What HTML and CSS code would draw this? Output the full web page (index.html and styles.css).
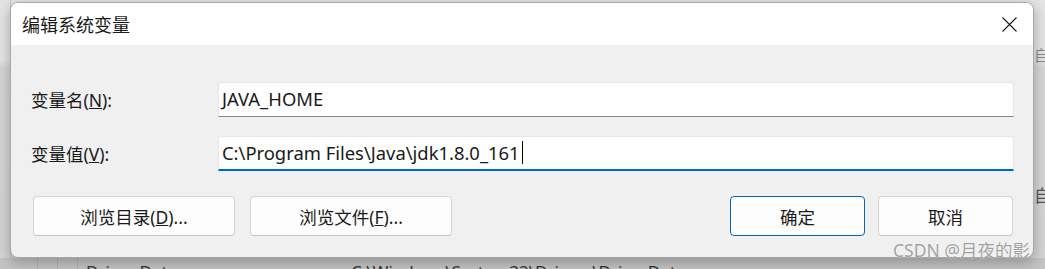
FILE: index.html
```html
<!DOCTYPE html>
<html lang="zh-CN">
<head>
  <meta charset="UTF-8" />
  <title>编辑系统变量</title>
  <link rel="stylesheet" href="styles.css">
</head>
<body>
  <!-- Window behind the dialog -->
  <div class="backdrop">
    <div class="bg-body">
      <div class="bg-side"></div>
      <div class="bg-right">
        <span class="bg-label top">自动</span>
        <span class="bg-label mid">自动</span>
      </div>
    </div>
    <div class="bg-row">
      <span class="bg-cell"></span>
      <span class="bg-cell"></span>
      <span class="bg-cell"></span>
      <span class="bg-name">Driver Data</span>
      <span class="bg-value">C:\Windows\System32\Drivers\DriverData</span>
    </div>
  </div>

  <!-- Edit variable dialog -->
  <div class="dialog">
    <div class="titlebar">
      <span class="title">编辑系统变量</span>
      <button class="close-btn" aria-label="关闭">
        <svg width="15" height="15" viewBox="0 0 15 15">
          <path d="M0.5 0.5 L14.5 14.5 M14.5 0.5 L0.5 14.5" stroke="#1a1a1a" stroke-width="1.1" fill="none" />
        </svg>
      </button>
    </div>

    <div class="content">
      <div class="field">
        <label>变量名(<u>N</u>):</label>
        <div class="input">JAVA_HOME</div>
      </div>

      <div class="field">
        <label>变量值(<u>V</u>):</label>
        <div class="input focused">C:\Program Files\Java\jdk1.8.0_161<span class="caret"></span></div>
      </div>

      <div class="actions">
        <button class="btn wide">浏览目录(<u>D</u>)...</button>
        <button class="btn wide">浏览文件(<u>F</u>)...</button>
        <span class="spacer"></span>
        <button class="btn primary">确定</button>
        <button class="btn">取消</button>
      </div>
    </div>
  </div>

  <div class="watermark">CSDN @月夜的影</div>
</body>
</html>
```

FILE: styles.css
```css
html, body {
  margin: 0;
  height: 100%;
}

body {
  font-family: 'Noto Sans', 'Noto Sans CJK SC', sans-serif;
  background: #d2d2d2;
  color: #1a1a1a;
  overflow: hidden;
  position: relative;
}

/* Background window */
.backdrop {
  height: 100%;
  display: flex;
  flex-direction: column;
}

.bg-body {
  flex: 1;
  display: flex;
  justify-content: space-between;
  background: linear-gradient(#e4e4e4 0, #e4e4e4 60px, #d6d6d6 68px, #d4d4d4 100%);
}

.bg-side {
  width: 10px;
  border-right: 1px solid #c6c6c6;
}

.bg-right {
  width: 11px;
  display: flex;
  flex-direction: column;
  justify-content: space-between;
  overflow: hidden;
  padding: 46px 0 54px;
}

.bg-label {
  font-family: 'Noto Sans CJK SC', sans-serif;
  font-size: 15px;
  line-height: 18px;
  color: #8a8a8a;
  white-space: nowrap;
}

.bg-label.mid {
  color: #555;
  font-size: 17px;
}

.bg-row {
  flex: 0 0 11px;
  display: flex;
  align-items: flex-start;
  background: #c4c4c4;
  overflow: hidden;
}

.bg-cell {
  width: 19px;
  height: 100%;
  border-right: 1px solid #b2b2b2;
}

.bg-cell:first-child {
  width: 37px;
}

.bg-name, .bg-value {
  font-size: 17px;
  line-height: 20px;
  padding-top: 4px;
  color: #333;
  white-space: nowrap;
}

.bg-name {
  width: 265px;
  padding-left: 8px;
}

/* Dialog */
.dialog {
  position: absolute;
  left: 10px;
  top: 2px;
  width: 1024px;
  height: 256px;
  box-sizing: border-box;
  background: #f0f0f0;
  border: 1px solid #a9a9a9;
  border-radius: 8px;
  overflow: hidden;
  box-shadow: 0 4px 14px rgba(0, 0, 0, 0.28);
}

.titlebar {
  height: 42px;
  background: #fff;
  display: flex;
  align-items: center;
  justify-content: space-between;
}

.title {
  font-family: 'Noto Sans CJK SC', sans-serif;
  font-size: 18px;
  padding-left: 11px;
}

.close-btn {
  width: 48px;
  height: 42px;
  border: none;
  background: transparent;
  display: flex;
  align-items: center;
  justify-content: center;
  padding: 0;
}

.content {
  padding: 37px 19px 0 19px;
  display: flex;
  flex-direction: column;
  gap: 19px;
}

.field {
  display: grid;
  grid-template-columns: 188px 1fr;
  align-items: center;
}

.field label {
  font-size: 17.5px;
  padding-left: 1px;
}

.input {
  height: 35px;
  box-sizing: border-box;
  background: #fff;
  border: 1px solid #e6e6e6;
  border-bottom: 1px solid #858585;
  border-radius: 3px 3px 0 0;
  padding: 0 3px 2px;
  font-size: 18.4px;
  display: flex;
  align-items: center;
  white-space: nowrap;
}

.input.focused {
  border-bottom: 2px solid #0067c0;
  padding-bottom: 1px;
}

.caret {
  width: 1px;
  height: 23px;
  background: #000;
  margin-left: 2px;
}

.actions {
  display: flex;
  gap: 15px;
  margin-top: 6px;
  padding: 0 1px 0 3px;
}

.spacer {
  flex: 1;
}

.btn {
  font-family: 'Noto Sans', 'Noto Sans CJK SC', sans-serif;
  font-size: 17.5px;
  color: #1a1a1a;
  height: 40px;
  width: 135px;
  background: #fdfdfd;
  border: 1px solid #d3d3d3;
  border-bottom-color: #c4c4c4;
  border-radius: 4px;
  padding: 0;
}

.btn.wide {
  width: 202px;
}

.btn.primary {
  border: 1px solid #0067c0;
  margin-right: -2px;
}

.watermark {
  position: absolute;
  left: 893px;
  top: 240px;
  font-family: 'Noto Sans', 'Noto Sans CJK SC', sans-serif;
  font-size: 17.5px;
  line-height: 20px;
  color: rgba(130, 130, 130, 0.75);
  text-shadow: 0 0 1px #fff;
  white-space: nowrap;
}
```
